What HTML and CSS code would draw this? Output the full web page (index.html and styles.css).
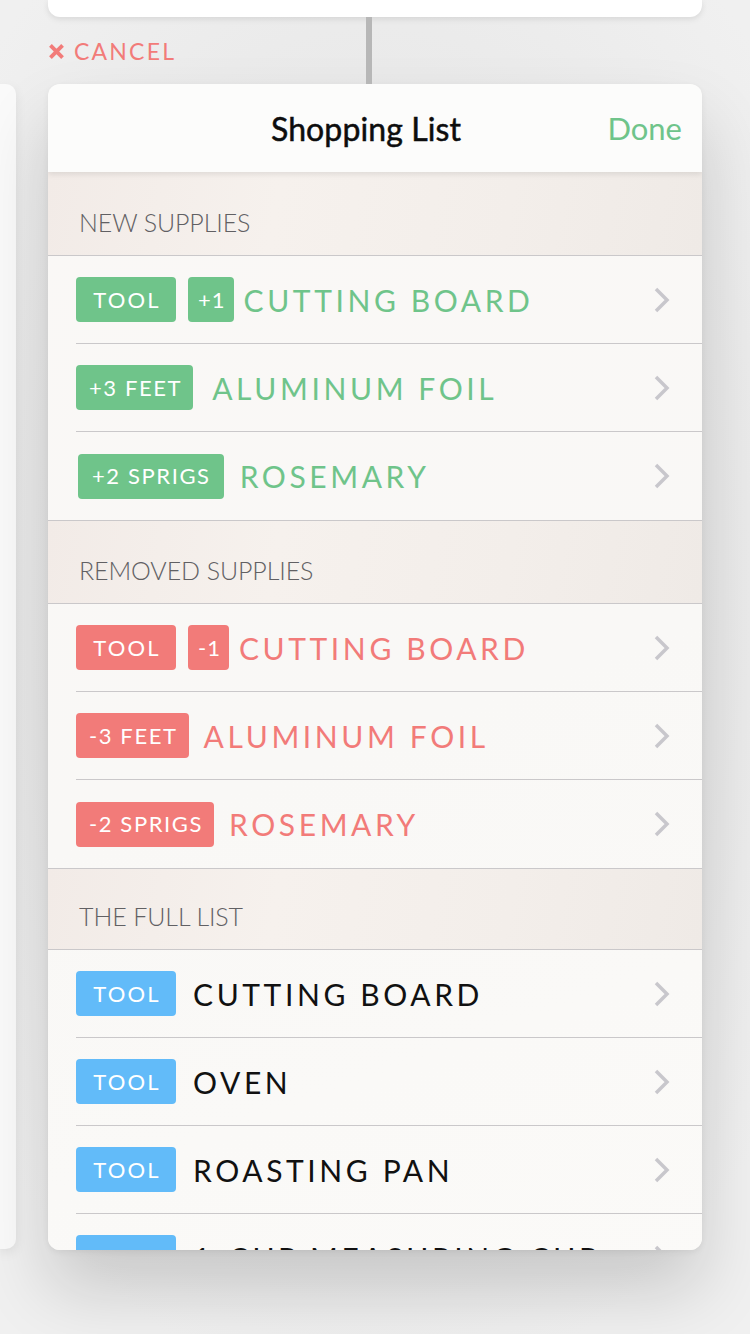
FILE: index.html
```html
<!DOCTYPE html>
<html>
<head>
<meta charset="utf-8">
<link rel="stylesheet" href="styles.css">
</head>
<body>
<div class="stage">
  <div class="top-card"></div>
  <div class="between">
    <div class="connector"></div>
    <div class="cancel">
      <svg class="cancel-x" viewBox="0 0 16 16"><path d="M2.3 2.3 L13.7 13.7 M13.7 2.3 L2.3 13.7"/></svg>
      <span>CANCEL</span>
    </div>
  </div>
  <div class="deck">
    <div class="peek-card"></div>
    <div class="card">
      <div class="card-header">
        <div class="title">Shopping List</div>
        <div class="done">Done</div>
      </div>
      <div class="card-body">
        <div class="section first">NEW SUPPLIES</div>
        <div class="row green">
          <div class="row-inner">
            <span class="badge type">TOOL</span><span class="badge small">+1</span><span class="name">CUTTING BOARD</span>
            <svg class="chev" viewBox="0 0 16 26"><polyline points="2,2 13,13 2,24"/></svg>
          </div>
        </div>
        <div class="row green">
          <div class="row-inner">
            <span class="badge wide-gap">+3 FEET</span><span class="name">ALUMINUM FOIL</span>
            <svg class="chev" viewBox="0 0 16 26"><polyline points="2,2 13,13 2,24"/></svg>
          </div>
        </div>
        <div class="row green last">
          <div class="row-inner">
            <span class="badge nudged">+2 SPRIGS</span><span class="name">ROSEMARY</span>
            <svg class="chev" viewBox="0 0 16 26"><polyline points="2,2 13,13 2,24"/></svg>
          </div>
        </div>

        <div class="section">REMOVED SUPPLIES</div>
        <div class="row red">
          <div class="row-inner">
            <span class="badge type">TOOL</span><span class="badge small">-1</span><span class="name">CUTTING BOARD</span>
            <svg class="chev" viewBox="0 0 16 26"><polyline points="2,2 13,13 2,24"/></svg>
          </div>
        </div>
        <div class="row red">
          <div class="row-inner">
            <span class="badge">-3 FEET</span><span class="name">ALUMINUM FOIL</span>
            <svg class="chev" viewBox="0 0 16 26"><polyline points="2,2 13,13 2,24"/></svg>
          </div>
        </div>
        <div class="row red last">
          <div class="row-inner">
            <span class="badge">-2 SPRIGS</span><span class="name">ROSEMARY</span>
            <svg class="chev" viewBox="0 0 16 26"><polyline points="2,2 13,13 2,24"/></svg>
          </div>
        </div>

        <div class="section short">THE FULL LIST</div>
        <div class="row blue">
          <div class="row-inner">
            <span class="badge type">TOOL</span><span class="name">CUTTING BOARD</span>
            <svg class="chev" viewBox="0 0 16 26"><polyline points="2,2 13,13 2,24"/></svg>
          </div>
        </div>
        <div class="row blue">
          <div class="row-inner">
            <span class="badge type">TOOL</span><span class="name">OVEN</span>
            <svg class="chev" viewBox="0 0 16 26"><polyline points="2,2 13,13 2,24"/></svg>
          </div>
        </div>
        <div class="row blue">
          <div class="row-inner">
            <span class="badge type">TOOL</span><span class="name">ROASTING PAN</span>
            <svg class="chev" viewBox="0 0 16 26"><polyline points="2,2 13,13 2,24"/></svg>
          </div>
        </div>
        <div class="row blue">
          <div class="row-inner">
            <span class="badge type">TOOL</span><span class="name">1-CUP MEASURING CUP</span>
            <svg class="chev" viewBox="0 0 16 26"><polyline points="2,2 13,13 2,24"/></svg>
          </div>
        </div>
      </div>
    </div>
  </div>
</div>
</body>
</html>
```
FILE: styles.css
```css
* { box-sizing: border-box; }
html, body {
  margin: 0;
  padding: 0;
  width: 750px;
  height: 1334px;
  overflow: hidden;
}
body {
  background: radial-gradient(ellipse 70% 60% at 50% 45%, #e3e3e3 0%, #e8e8e8 55%, #f0f0f0 100%);
  font-family: "Lato", "Open Sans", sans-serif;
}
.stage {
  display: flex;
  flex-direction: column;
}
.top-card {
  margin-left: 48px;
  width: 654px;
  height: 17px;
  background: #ffffff;
  border-radius: 0 0 12px 12px;
  box-shadow: 0 2px 6px rgba(0,0,0,0.10);
}
.between {
  position: relative;
  height: 67px;
  margin-left: 48px;
  width: 654px;
  display: flex;
  align-items: center;
}
.connector {
  position: absolute;
  left: 318px;
  top: 0;
  width: 6px;
  height: 67px;
  background: #b7b7b7;
}
.cancel {
  display: flex;
  align-items: center;
  color: #f27b79;
  font-size: 23px;
  letter-spacing: 2.2px;
  font-weight: 400;
  line-height: 1;
  padding-top: 2px;
}
.cancel-x {
  width: 17px;
  height: 17px;
  margin-right: 9px;
  margin-top: -1px;
}
.cancel-x path {
  stroke: #f27b79;
  stroke-width: 3.6;
  fill: none;
}
.deck {
  display: flex;
  align-items: flex-start;
}
.peek-card {
  width: 16px;
  height: 1165px;
  margin-right: 32px;
  background: #fafafa;
  border-radius: 0 10px 10px 0;
  box-shadow: 0 4px 12px rgba(0,0,0,0.08);
}
.card {
  width: 654px;
  height: 1166px;
  border-radius: 12px;
  overflow: hidden;
  background: #faf9f7;
  box-shadow: 0 40px 70px rgba(0,0,0,0.16), 0 2px 6px rgba(0,0,0,0.06);
  display: flex;
  flex-direction: column;
}
.card-header {
  position: relative;
  z-index: 2;
  flex: 0 0 88px;
  background: #fcfcfb;
  box-shadow: 0 2px 6px rgba(0,0,0,0.10);
  display: flex;
  align-items: center;
  justify-content: center;
  padding-right: 18px;
}
.title {
  font-size: 32px;
  font-weight: 400;
  color: #0d0d0d;
  letter-spacing: 0.1px;
  -webkit-text-stroke: 0.5px #0d0d0d;
}
.done {
  position: absolute;
  right: 20px;
  top: 0;
  height: 88px;
  display: flex;
  align-items: center;
  font-size: 31px;
  font-weight: 400;
  color: #6fc48a;
}
.card-body {
  flex: 1;
  background: linear-gradient(160deg, #faf8f6 0%, #f9f8f6 50%, #fbfaf8 100%);
}
.section {
  height: 84px;
  padding: 0 0 18px 31px;
  display: flex;
  align-items: flex-end;
  font-size: 25px;
  font-weight: 300;
  color: #616063;
  letter-spacing: -0.1px;
  background: linear-gradient(100deg, #f2ebe7 0%, #f6f1ed 35%, #f3eeea 70%, #efeae6 100%);
  border-top: 1px solid #cac8ca;
  border-bottom: 1px solid #cac8ca;
}
.section.first {
  border-top: none;
}
.section.short {
  height: 82px;
}
.row {
  height: 88px;
  padding-left: 28px;
}
.row-inner {
  height: 88px;
  display: flex;
  align-items: center;
  border-bottom: 1px solid #cac8ca;
  padding-right: 32px;
}
.row.last .row-inner {
  border-bottom: none;
}
.badge {
  height: 45px;
  padding: 0 11px 0 13px;
  border-radius: 4px;
  color: #fff;
  font-size: 22px;
  font-weight: 400;
  letter-spacing: 1.6px;
  display: flex;
  align-items: center;
  justify-content: center;
  margin-right: 15px;
  white-space: nowrap;
  line-height: 1;
}
.badge.wide-gap {
  margin-right: 19px;
}
.badge.nudged {
  margin-left: 2px;
  padding: 0 13px 0 14px;
  margin-right: 16px;
}
.badge.type {
  width: 100px;
  padding: 0 0 0 2px;
  letter-spacing: 2.2px;
  margin-right: 17px;
}
.badge.type + .badge.small {
  margin-left: -5px;
}
.badge.small {
  padding: 0 8px 0 10px;
  letter-spacing: 1px;
  margin-right: 10px;
}
.name {
  font-size: 30px;
  font-weight: 400;
  letter-spacing: 3.6px;
  white-space: nowrap;
  line-height: 1;
  flex: 1;
}
.green .badge { background: #6fc48a; }
.green .name { color: #6fc48a; }
.red .badge { background: #f27b79; }
.red .name { color: #f27b79; }
.blue .badge { background: #62bbf9; }
.blue .name { color: #111; }
.chev {
  width: 16px;
  height: 26px;
  flex: 0 0 16px;
}
.chev polyline {
  fill: none;
  stroke: #c8c7cc;
  stroke-width: 3.5;
}
```
